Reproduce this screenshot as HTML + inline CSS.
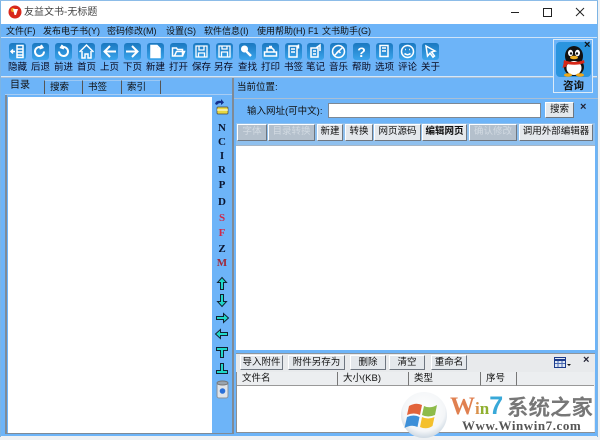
<!DOCTYPE html>
<html><head><meta charset="utf-8">
<style>
html,body{margin:0;padding:0;width:600px;height:440px;overflow:hidden;background:#eef1f4}
body{position:relative;font-family:"Liberation Sans","WenQuanYi Zen Hei","Noto Sans CJK SC",sans-serif;font-size:9px;color:#111}
.a{position:absolute}
.t{position:absolute;white-space:nowrap;line-height:12px;font-size:9.5px;color:#111}
.m{position:absolute;top:25px;white-space:nowrap;line-height:12px;font-size:9px;color:#111}
.l{position:absolute;width:23px;text-align:center;top:62px;line-height:12px;font-size:9.5px;white-space:nowrap;color:#0a0a20}
.b{position:absolute;box-sizing:border-box;background:#e4e8ec;border:1px solid;border-color:#fff #6e7680 #6e7680 #fff;text-align:center;line-height:14px;font-size:9.5px;white-space:nowrap;color:#111}
.g{color:#d2dae2;background:#b4c0cc}
.h{position:absolute;box-sizing:border-box;top:372px;height:14px;background:#eceef0;border-right:1px solid #777;border-bottom:1px solid #999;line-height:13px;font-size:9.5px;padding-left:5px;white-space:nowrap}
.s{position:absolute;left:212px;width:20px;text-align:center;font-family:"Liberation Serif",serif;font-weight:bold;font-size:11px;line-height:12px;color:#0a1530}
.tab{position:absolute;box-sizing:border-box;top:80px;height:14px;border-left:1px solid #555;border-top:1px solid #9cc8f4;line-height:14px;font-size:9.5px;padding-left:5px;white-space:nowrap}
</style></head>
<body>
<div class="a" style="left:0;top:0;width:598px;height:24px;background:#fff"></div>
<div class="a" style="left:0;top:24px;width:598px;height:412px;background:#6db4f8"></div>
<div class="a" style="left:0;top:0;width:1px;height:437px;background:#7cb4e4"></div>
<div class="a" style="left:597px;top:0;width:1px;height:437px;background:#7cb4e4"></div>
<div class="a" style="left:0;top:0;width:598px;height:1px;background:#8cbce8"></div>

<svg class="a" style="left:8px;top:5px" width="14" height="14" viewBox="0 0 14 14"><circle cx="7" cy="7" r="6.5" fill="#d8281c"/><circle cx="5" cy="5" r="2" fill="#f4a020"/><path d="M5 4l5 0-2 6-1.500 0z" fill="#fff"/></svg>
<div class="t" style="left:24px;top:7px;font-size:10px;color:#444">友益文书-无标题</div>
<svg class="a" style="left:505px;top:0" width="90" height="24" viewBox="0 0 90 24" fill="none" stroke="#222" stroke-width="1"><path d="M6 12.500H14"/><rect x="38.500" y="8.500" width="8" height="8"/><path d="M71 8l8 8M79 8l-8 8"/></svg>

<div class="a" style="left:1px;top:37px;width:596px;height:1px;background:#cfe4f8"></div>
<div class="m" style="left:6px">文件(F)</div>
<div class="m" style="left:43px">发布电子书(Y)</div>
<div class="m" style="left:107px">密码修改(M)</div>
<div class="m" style="left:166px">设置(S)</div>
<div class="m" style="left:204px">软件信息(I)</div>
<div class="m" style="left:257px">使用帮助(H)</div>
<div class="m" style="left:308px">F1</div>
<div class="m" style="left:322px">文书助手(G)</div>

<svg class="a" style="left:0;top:40px" width="450" height="22" viewBox="0 40 450 22">
<defs><linearGradient id="k" x1="0" y1="0" x2="0" y2="1"><stop offset="0" stop-color="#1a78c0"/><stop offset="1" stop-color="#3aa4ec"/></linearGradient></defs>
<g fill="url(#k)">
<rect x="9" y="43" width="17" height="17" rx="3"/><rect x="32" y="43" width="17" height="17" rx="3"/><rect x="55" y="43" width="17" height="17" rx="3"/><rect x="78" y="43" width="17" height="17" rx="3"/><rect x="101" y="43" width="17" height="17" rx="3"/><rect x="124" y="43" width="17" height="17" rx="3"/><rect x="147" y="43" width="17" height="17" rx="3"/><rect x="170" y="43" width="17" height="17" rx="3"/><rect x="193" y="43" width="17" height="17" rx="3"/><rect x="216" y="43" width="17" height="17" rx="3"/><rect x="239" y="43" width="17" height="17" rx="3"/><rect x="262" y="43" width="17" height="17" rx="3"/><rect x="285" y="43" width="17" height="17" rx="3"/><rect x="307" y="43" width="17" height="17" rx="3"/><rect x="330" y="43" width="17" height="17" rx="3"/><rect x="353" y="43" width="17" height="17" rx="3"/><rect x="376" y="43" width="17" height="17" rx="3"/><rect x="399" y="43" width="17" height="17" rx="3"/><rect x="422" y="43" width="17" height="17" rx="3"/>
</g>
<g fill="none" stroke="#fff" stroke-width="1.500">
<path d="M17 45.500h6v12h-6zM17 49h6M17 52h6M17 55h6M15 51.500h-4M13 49.500l-2 2 2 2"/>
<path d="M44 51.500a4.500 4.500 0 1 1-2.500-4M41 45l1.500 2.500-3 1" stroke-width="2"/>
<path d="M59 51.500a4.500 4.500 0 1 0 2.500-4M62.500 45l-1.500 2.500 3 1" stroke-width="2"/>
<path d="M79.500 52l7-7 7 7M82 51v7h3v-4h3v4h3v-7"/>
<path d="M116 51.500h-11M110 46l-5.500 5.500 5.500 5.500" stroke-width="2"/>
<path d="M126 51.500h11M132 46l5.500 5.500-5.500 5.500" stroke-width="2"/>
<path d="M151 45.500h6l3 3v9h-9zM157 45.500v3h3" fill="#fff" stroke="#fff"/>
<path d="M172.500 56v-8h4l1 1.500h5v6.500zM174.500 56l2-4.500h8l-2 4.500z"/>
<path d="M196 46h11v11h-11zM199 46v4h5v-4M198.500 57v-4h6v4" stroke-width="1.300"/>
<path d="M219 46h11v11h-11zM222 46v3h5v-3M221.500 57v-5h6v5" stroke-width="1.300"/>
<path d="M251 56l-4.500-4.500" stroke-width="2.500"/>
<circle cx="244.500" cy="49" r="2.800" fill="#fff"/>
<path d="M264.500 52h12v4h-12zM267 52v-4h5l2 2v2M269 46.500h3"/>
<path d="M289 46h8v11h-8zM291 49h4M291 52h4M298.500 44.500v4"/>
<path d="M311 48h7v9h-7zM313 51h3M313 54h3M316 48l4-3v6" />
<circle cx="338.500" cy="51.500" r="6"/><path d="M334.500 55.500l8-8M336.500 53l2-2 2 2" />
<path d="M380 45.500h8v11h-8zM382 48h4M382 51h4"/>
<circle cx="407.500" cy="51.500" r="6"/><path d="M404.500 53.500q3 2.500 6 0M405 49.500h.8M409.200 49.500h.8"/>
<path d="M426 46l9 5-3.500 1 3 4-1.500 1.200-3-4-2.500 2.800z"/>
</g>
<text x="361.500" y="57" text-anchor="middle" font-family="Liberation Sans" font-weight="bold" font-size="14" fill="#fff">?</text>
</svg>

<div class="l" style="left:6px">隐藏</div><div class="l" style="left:29px">后退</div><div class="l" style="left:52px">前进</div><div class="l" style="left:75px">首页</div><div class="l" style="left:98px">上页</div><div class="l" style="left:121px">下页</div><div class="l" style="left:144px">新建</div><div class="l" style="left:167px">打开</div><div class="l" style="left:190px">保存</div><div class="l" style="left:212px">另存</div><div class="l" style="left:236px">查找</div><div class="l" style="left:259px">打印</div><div class="l" style="left:282px">书签</div><div class="l" style="left:304px">笔记</div><div class="l" style="left:327px">音乐</div><div class="l" style="left:350px">帮助</div><div class="l" style="left:373px">选项</div><div class="l" style="left:396px">评论</div><div class="l" style="left:419px">关于</div>

<div class="a" style="left:1px;top:76px;width:596px;height:1px;background:#d6e8f8"></div>
<div class="a" style="left:1px;top:77px;width:596px;height:1px;background:#a9bfd6"></div>

<!-- tabs -->
<div class="t" style="left:10px;top:80px;font-size:10px">目录</div>
<div class="tab" style="left:44px;width:39px">搜索</div>
<div class="tab" style="left:82px;width:39px">书签</div>
<div class="tab" style="left:121px;width:40px;border-right:1px solid #555">索引</div>
<div class="a" style="left:5px;top:94px;width:228px;height:1px;background:#a8cdf4"></div>
<div class="a" style="left:5px;top:95px;width:2px;height:338px;background:#7f8a96"></div>
<div class="a" style="left:8px;top:97px;width:204px;height:336px;background:#fff"></div>
<div class="a" style="left:5px;top:433px;width:228px;height:1px;background:#7f8a96"></div>
<div class="a" style="left:232px;top:78px;width:2px;height:356px;background:#7f8a96"></div>

<!-- sidebar -->
<svg class="a" style="left:213px;top:98px" width="16" height="18" viewBox="0 0 16 18"><path d="M2 6q1-4 6-3l0-2 3 3.500-3 2.500v-2q-3 0-4 2z" fill="#14308c"/><rect x="4" y="9" width="11" height="7" rx="1" fill="#e8d840" stroke="#444" stroke-width=".7"/><path d="M4 12h11" stroke="#fff"/></svg>
<div class="s" style="top:122px">N</div>
<div class="s" style="top:136px">C</div>
<div class="s" style="top:150px">I</div>
<div class="s" style="top:164px">R</div>
<div class="s" style="top:179px">P</div>
<div class="s" style="top:196px">D</div>
<div class="s" style="top:212px;color:#d02848">S</div>
<div class="s" style="top:227px;color:#d02848">F</div>
<div class="s" style="top:243px">Z</div>
<div class="s" style="top:257px;color:#a02838">M</div>
<svg class="a" style="left:212px;top:275px" width="20" height="128" viewBox="0 0 20 128" fill="#1fd8c8" stroke="#123" stroke-width="1">
<path d="M10 2.500l4.500 5h-3v7h-3v-7h-3z"/>
<path d="M8.500 19.500h3v7h3l-4.500 5-4.500-5h3z"/>
<path d="M4.500 41.500h7v-3l5 4.500-5 4.500v-3h-7z"/>
<path d="M15.500 57.500h-7v-3l-5 4.500 5 4.500v-3h7z"/>
<path d="M4.500 72.500h11v3h-4v7h-3v-7h-4z"/>
<path d="M8.500 88.500h3v7h4v3h-11v-3h4z"/>
<rect x="5" y="108" width="11" height="15" rx="2" fill="#dfe4ea" stroke="#8a929a"/><ellipse cx="10.500" cy="108" rx="5.500" ry="2" fill="#9aa4ae" stroke="#777"/><circle cx="10.500" cy="116" r="2.800" fill="#2a70d8" stroke="none"/>
</svg>

<!-- right -->
<div class="t" style="left:237px;top:82px">当前位置:</div>
<div class="a" style="left:234px;top:98px;width:364px;height:1px;background:#a9bfd6"></div>
<div class="a" style="left:236px;top:99px;width:359px;height:24px;background:#6db4f8;border-bottom:1px solid #9fb6cc"></div>
<div class="t" style="left:247px;top:106px">输入网址(可中文):</div>
<div class="a" style="left:328px;top:103px;width:213px;height:15px;background:#fff;box-sizing:border-box;border:1px solid #7d8894"></div>
<div class="b" style="left:545px;top:102px;width:29px;height:16px">搜索</div>
<div class="t" style="left:580px;top:101px;font-size:11px;font-weight:bold;color:#223">×</div>

<div class="a" style="left:236px;top:123px;width:359px;height:22px;background:#8fc0ee"></div>
<div class="b g" style="left:237px;top:124px;width:30px;height:17px">字体</div>
<div class="b g" style="left:268px;top:124px;width:47px;height:17px">目录转换</div>
<div class="b" style="left:317px;top:124px;width:26px;height:17px">新建</div>
<div class="b" style="left:345px;top:124px;width:28px;height:17px">转换</div>
<div class="b" style="left:374px;top:124px;width:47px;height:17px">网页源码</div>
<div class="b" style="left:422px;top:124px;width:45px;height:17px;font-weight:bold">编辑网页</div>
<div class="b g" style="left:469px;top:124px;width:48px;height:17px">确认修改</div>
<div class="b" style="left:519px;top:124px;width:74px;height:17px">调用外部编辑器</div>
<div class="a" style="left:236px;top:145px;width:359px;height:205px;background:#fff"></div>
<div class="a" style="left:236px;top:145px;width:359px;height:1px;background:#a6b6c6"></div>

<div class="a" style="left:236px;top:353px;width:359px;height:80px;background:#e8eaec"></div>
<div class="a" style="left:236px;top:353px;width:359px;height:1px;background:#8d959d"></div>
<div class="b" style="left:240px;top:355px;width:43px;height:15px;line-height:13px">导入附件</div>
<div class="b" style="left:288px;top:355px;width:57px;height:15px;line-height:13px">附件另存为</div>
<div class="b" style="left:350px;top:355px;width:36px;height:15px;line-height:13px">删除</div>
<div class="b" style="left:389px;top:355px;width:36px;height:15px;line-height:13px">清空</div>
<div class="b" style="left:431px;top:355px;width:36px;height:15px;line-height:13px">重命名</div>
<svg class="a" style="left:554px;top:357px" width="18" height="12" viewBox="0 0 18 12"><rect x=".5" y=".5" width="11" height="10" fill="#dfe8f4" stroke="#1c3c8c"/><path d="M1 3h10" stroke="#1c3c8c" stroke-width="2"/><path d="M4 4v6M8 4v6M1 6.500h10" stroke="#4868b0"/><path d="M13 7h4l-2 2z" fill="#111"/></svg>
<div class="t" style="left:583px;top:354px;font-size:11px;font-weight:bold;color:#223">×</div>
<div class="h" style="left:237px;width:101px">文件名</div>
<div class="h" style="left:338px;width:71px">大小(KB)</div>
<div class="h" style="left:409px;width:72px">类型</div>
<div class="h" style="left:481px;width:36px">序号</div>
<div class="h" style="left:517px;width:77px;border-right:0"></div>
<div class="a" style="left:237px;top:386px;width:357px;height:46px;background:#fff"></div>
<div class="a" style="left:236px;top:372px;width:1px;height:61px;background:#8a8f94"></div>
<div class="a" style="left:236px;top:432px;width:359px;height:1px;background:#8a8f94"></div>

<!-- QQ -->
<div class="a" style="left:553px;top:39px;width:40px;height:54px;box-sizing:border-box;background:#6db4f8;border:1px solid #dcebf8"></div>
<svg class="a" style="left:556px;top:42px" width="36" height="36" viewBox="0 0 36 36">
<rect width="35" height="35" rx="4" fill="#2a94de"/>
<ellipse cx="18" cy="14" rx="9" ry="10" fill="#111"/>
<ellipse cx="18" cy="25" rx="10" ry="9" fill="#111"/>
<ellipse cx="18" cy="26" rx="7.500" ry="7" fill="#fff"/>
<ellipse cx="14.500" cy="11" rx="2.500" ry="3.200" fill="#fff"/><ellipse cx="21.500" cy="11" rx="2.500" ry="3.200" fill="#fff"/>
<circle cx="15" cy="11.500" r="1.200" fill="#111"/><circle cx="21" cy="11.500" r="1.200" fill="#111"/>
<ellipse cx="18" cy="15.500" rx="4" ry="1.800" fill="#f0b020"/>
<path d="M8 18q10 4 20 0l.500 3q-10 3.500-21 0z" fill="#d82818"/><path d="M8 20l-1.500 6 4-1.500 1-4z" fill="#d82818"/>
<ellipse cx="12" cy="33" rx="4" ry="1.800" fill="#f0a818"/><ellipse cx="24" cy="33" rx="4" ry="1.800" fill="#f0a818"/>
</svg>
<div class="t" style="left:584px;top:39px;font-size:11px;font-weight:bold;color:#111">×</div>
<div class="t" style="left:563px;top:80px;font-size:10.500px;font-weight:bold">咨询</div>

<!-- watermark -->
<svg class="a" style="left:400px;top:388px" width="50" height="52" viewBox="0 0 50 52">
<defs><radialGradient id="w" cx=".5" cy=".4" r=".6"><stop offset="0" stop-color="#fff"/><stop offset=".75" stop-color="#f4f6f8"/><stop offset="1" stop-color="#cdd8e2"/></radialGradient></defs>
<circle cx="24" cy="27" r="23" fill="url(#w)"/>
<path d="M9 18q7-4 13-1l-2 10q-6-3-13 0z" fill="#e2633a"/>
<path d="M24 18q6 3 13-1l-2 10q-7 3-13 0z" fill="#8dbb4a"/>
<path d="M7 29q7-3 12.500 0l-2 10q-6-3-13 1z" fill="#3d8fd8"/>
<path d="M22 29q6 3 12.500 0l-2 9q-6 4-12.500 1z" fill="#f4c02c"/>
</svg>
<div class="a" style="left:450px;top:393px;white-space:nowrap;font-family:'Liberation Serif',serif;font-weight:bold;font-size:25px;line-height:26px;color:#e08050">W<span style="font-size:17px;color:#d9904a">i</span><span style="font-size:17px;color:#90b030">n</span><span style="font-family:'Liberation Sans',sans-serif;color:#38a8d8">7</span></div>
<div class="a" style="left:507px;top:395px;white-space:nowrap;font-family:'Noto Sans CJK SC',sans-serif;font-weight:bold;font-size:21.500px;line-height:24px;color:#777">系统之家</div>
<div class="a" style="left:462px;top:419px;white-space:nowrap;font-family:'Liberation Serif',serif;font-weight:bold;font-size:13px;line-height:14px;letter-spacing:.55px;color:#555">Www.Winwin7.com</div>
</body></html>
